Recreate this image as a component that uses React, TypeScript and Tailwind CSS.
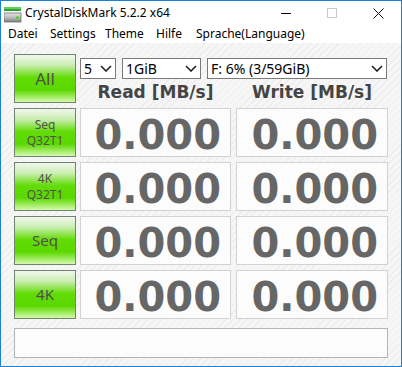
import React from "react";

// ─── Small pieces ────────────────────────────────────────────────────────────

function AppIcon() {
  return (
    <svg width="18" height="16" viewBox="0 0 18 16">
      <rect x="0" y="0" width="17" height="2" fill="#5fd35f" />
      <rect x="0" y="2" width="17" height="2" fill="#2fa52f" />
      <defs>
        <linearGradient id="drv" x1="0" y1="0" x2="0" y2="1">
          <stop offset="0" stopColor="#e6e6e6" />
          <stop offset="0.5" stopColor="#bdbdbd" />
          <stop offset="1" stopColor="#7d7d7d" />
        </linearGradient>
      </defs>
      <rect x="0" y="6" width="17" height="9" fill="url(#drv)" />
      <rect x="0" y="6" width="17" height="9" fill="none" stroke="#6f6f6f" strokeWidth="0.8" />
      <rect x="12" y="9.5" width="3" height="2" fill="#4ccd2c" />
    </svg>
  );
}

function Chevron() {
  return (
    <svg width="12" height="7" viewBox="0 0 12 7" className="shrink-0">
      <path d="M1 1 L6 6 L11 1" fill="none" stroke="#222" strokeWidth="1.6" />
    </svg>
  );
}

function Select({ value, w }: { value: string; w: string }) {
  return (
    <div
      className={`flex h-[21px] items-center justify-between border border-[#7a7a7a] bg-white pl-[3px] pr-[3px] text-[14px] leading-none text-black ${w}`}
    >
      <span>{value}</span>
      <Chevron />
    </div>
  );
}

function TestButton({ lines, size }: { lines: string[]; size: "all" | "one" | "two" }) {
  const cls =
    size === "all"
      ? "text-[17px] leading-none"
      : size === "one"
      ? "text-[15px] leading-none"
      : "text-[12px] leading-[16px]";
  return (
    <div className="flex h-[49px] w-[62px] flex-col items-center justify-center border border-[#6f866a] bg-[linear-gradient(to_bottom,#f2f6f0_0%,#c9eeb0_22%,#62dc06_48%,#5ad800_74%,#9cea5a_88%,#d4f9b0_100%)] text-[#505050]">
      {lines.map((l) => (
        <span key={l} className={cls}>
          {l}
        </span>
      ))}
    </div>
  );
}

function ValueCell({ w }: { w: string }) {
  return (
    <div
      className={`flex h-[49px] items-center justify-end border border-[#d2d2d2] bg-[#fcfcfc] pr-[9px] pt-[4px] font-['DejaVu_Sans',sans-serif] text-[40px] font-bold leading-none text-[#666] ${w}`}
    >
      0.000
    </div>
  );
}

const ROWS = [["Seq", "Q32T1"], ["4K", "Q32T1"], ["Seq"], ["4K"]];

// ─── Window ──────────────────────────────────────────────────────────────────

export default function App() {
  return (
    <div className="flex h-[367px] w-[402px] flex-col border border-[#1883d7] bg-white font-['Noto_Sans','Liberation_Sans',sans-serif]">
      {/* Title bar */}
      <div className="flex h-[24px] shrink-0 items-center">
        <div className="ml-[3px] mt-[3px]">
          <AppIcon />
        </div>
        <span className="ml-[3px] text-[12px] text-black">CrystalDiskMark 5.2.2 x64</span>
        <div className="ml-auto flex h-full items-center">
          <div className="flex w-[46px] items-center justify-center">
            <div className="h-px w-[10px] bg-black" />
          </div>
          <div className="flex w-[46px] items-center justify-center">
            <div className="h-[10px] w-[10px] border border-[#c8c8c8]" />
          </div>
          <div className="flex w-[46px] items-center justify-center">
            <svg width="11" height="11" viewBox="0 0 11 11">
              <path d="M0.5 0.5 L10.5 10.5 M10.5 0.5 L0.5 10.5" stroke="#111" strokeWidth="1" />
            </svg>
          </div>
        </div>
      </div>

      {/* Menu bar */}
      <div className="flex h-[18px] shrink-0 items-center pl-[7px] text-[12px] text-black">
        <span className="w-[42px]">Datei</span>
        <span className="w-[55px]">Settings</span>
        <span className="w-[51px]">Theme</span>
        <span className="w-[40px]">Hilfe</span>
        <span>Sprache(Language)</span>
      </div>

      {/* Main panel */}
      <div className="flex flex-1 flex-col bg-[image:repeating-linear-gradient(135deg,#f6f6f6_0px,#f6f6f6_4px,#ededed_4px,#ededed_5px)] pl-[13px] pt-[11px]">
        <div className="flex gap-[4px]">
          <TestButton lines={["All"]} size="all" />
          <div className="flex flex-col">
            <div className="mt-[4px] flex gap-[6px]">
              <Select value="5" w="w-[36px]" />
              <Select value="1GiB" w="w-[79px]" />
              <Select value="F: 6% (3/59GiB)" w="w-[180px]" />
            </div>
            <div className="mt-[5px] flex gap-[5px] font-['DejaVu_Sans',sans-serif] text-[17px] font-bold leading-none text-[#444]">
              <span className="w-[151px] text-center">Read [MB/s]</span>
              <span className="w-[152px] text-center">Write [MB/s]</span>
            </div>
          </div>
        </div>

        <div className="mt-[5px] flex flex-col gap-[5px]">
          {ROWS.map((r, i) => (
            <div key={i} className="flex">
              <TestButton lines={r} size={r.length === 1 ? "one" : "two"} />
              <div className="ml-[4px]">
                <ValueCell w="w-[151px]" />
              </div>
              <div className="ml-[5px]">
                <ValueCell w="w-[152px]" />
              </div>
            </div>
          ))}
        </div>

        <div className="mt-[9px] h-[30px] w-[374px] border border-[#b4b4b4] bg-[#fcfcfc]" />
      </div>
    </div>
  );
}
